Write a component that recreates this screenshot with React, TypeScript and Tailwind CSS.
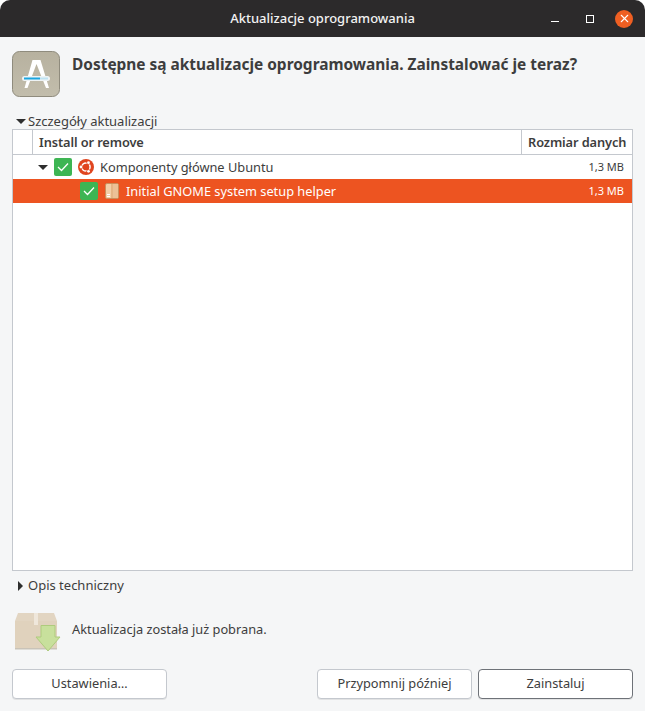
import { X } from "lucide-react";

const Check = () => (
  <span className="flex size-[18px] items-center justify-center rounded-[2px] bg-[#3db553]">
    <svg width="12" height="10" viewBox="0 0 12 10" fill="none" stroke="white" strokeWidth="1.3">
      <path d="M1 5l3.5 3.5L11 1.5" />
    </svg>
  </span>
);

const UbuntuLogo = () => (
  <svg width="16" height="16" viewBox="0 0 16 16">
    <circle cx="8" cy="8" r="8" fill="#e0451f" />
    <circle cx="8" cy="8" r="4.1" fill="none" stroke="white" strokeWidth="1.5" />
    <circle cx="3" cy="8" r="2.1" fill="#e0451f" />
    <circle cx="10.5" cy="3.7" r="2.1" fill="#e0451f" />
    <circle cx="10.5" cy="12.3" r="2.1" fill="#e0451f" />
    <circle cx="3" cy="8" r="1.4" fill="white" />
    <circle cx="10.5" cy="3.7" r="1.4" fill="white" />
    <circle cx="10.5" cy="12.3" r="1.4" fill="white" />
  </svg>
);

const PackageIcon = () => (
  <svg width="14" height="16" viewBox="0 0 14 16">
    <rect x="0.5" y="0.5" width="13" height="15" rx="1.5" fill="#f3cfa8" stroke="#c98f5c" />
    <rect x="6.500" y="1" width="1" height="14" fill="#d79a63" />
    <rect x="8" y="1" width="5" height="14" fill="#ecc096" />
    <rect x="2" y="11" width="3" height="1" fill="#fff" />
    <rect x="2" y="13" width="3" height="1" fill="#fff" />
  </svg>
);

const AppIcon = () => (
  <svg width="48" height="46" viewBox="0 0 48 46">
    <defs>
      <linearGradient id="tile" x1="0" y1="0" x2="0" y2="1">
        <stop offset="0" stopColor="#b7b19f" />
        <stop offset="1" stopColor="#c2bdac" />
      </linearGradient>
    </defs>
    <rect x="0.5" y="0.5" width="47" height="45" rx="7" fill="url(#tile)" stroke="#8f8b7d" />
    <path d="M20.500 9h8L37 37h-3L24.500 13 15.500 37h-3z" fill="#fff" />
    <rect x="10" y="25" width="28" height="5" rx="2.500" fill="#eef3f4" />
    <rect x="12" y="26.500" width="16" height="2" fill="#1ba6e0" />
    <rect x="28" y="26.500" width="8" height="2" fill="#bfe3f2" />
  </svg>
);

const BoxIcon = () => (
  <svg width="46" height="40" viewBox="0 0 46 40">
    <path d="M3 1h36l3 8v28H0V9z" fill="#e2d5c2" />
    <path d="M0 9h42v28H0z" fill="#e0d2bd" />
    <rect x="19" y="1" width="4" height="12" fill="#efe7db" />
    <rect x="0" y="36" width="42" height="1.500" fill="#c9c3b8" />
    <path d="M26 13.500h14V25h5L33 39 21 25h5z" fill="#c8e09c" stroke="#aecb7d" strokeWidth="1" />
  </svg>
);

const Button = ({ label, focused }: { label: string; focused?: boolean }) => (
  <button
    className={`h-[30px] w-[155px] rounded-[4px] border bg-white text-[12.8px] text-[#3d3d3d] shadow-[0_1px_0_rgba(0,0,0,0.08)] ${
      focused ? "border-[#6e7278]" : "border-[#c4c8ce]"
    }`}
  >
    {label}
  </button>
);

export default function App() {
  return (
    <div className="flex h-[711px] w-[645px] flex-col overflow-hidden rounded-t-[10px] bg-[#f5f6f7] font-['Noto_Sans',sans-serif] text-[13px] text-[#3d3d3d]">
      <header className="relative flex h-[37px] shrink-0 items-center justify-center bg-[#2c2a2b] text-[13px] font-medium text-[#f2f2f2]">
        Aktualizacje oprogramowania
        <div className="absolute top-0 right-[12px] flex h-full items-center">
          <span className="mt-[5px] mr-[27px] h-[1px] w-[8px] bg-white" />
          <span className="mr-[21px] size-[8px] border border-white" />
          <span className="flex size-[18px] items-center justify-center rounded-full bg-[#ef5f22]">
            <X size={13} color="white" strokeWidth={2} />
          </span>
        </div>
      </header>

      <div className="flex h-[71px] shrink-0 items-start pt-[14px] pl-[12px]">
        <AppIcon />
        <h1 className="ml-[12px] text-[15.45px] leading-[26px] font-bold whitespace-nowrap text-[#3d3d3d]">
          Dostępne są aktualizacje oprogramowania. Zainstalować je teraz?
        </h1>
      </div>

      <div className="flex h-[21px] shrink-0 items-center pt-[6px] pl-[16px]">
        <span className="mr-[2px] h-0 w-0 border-x-[5px] border-t-[5px] border-x-transparent border-t-[#2e2e2e]" />
        Szczegóły aktualizacji
      </div>

      <div className="mx-[12px] flex h-[442px] shrink-0 flex-col border border-[#c4c8ce] bg-white text-[12.8px]">
        <div className="flex h-[25px] shrink-0 border-b border-[#c4c8ce] font-semibold tracking-[-0.1px]">
          <div className="w-[20px] border-r border-[#c4c8ce]" />
          <div className="flex flex-1 items-center pt-px pl-[6px]">Install or remove</div>
          <div className="flex w-[111px] items-center border-l border-[#c4c8ce] pt-px pl-[6px] whitespace-nowrap">
            Rozmiar danych
          </div>
        </div>
        <div className="flex h-[24px] shrink-0 items-center pr-[8px] pl-[25px]">
          <span className="mr-[6px] h-0 w-0 border-x-[5px] border-t-[5px] border-x-transparent border-t-[#2e2e2e]" />
          <Check />
          <span className="mr-[6px] ml-[6px]">
            <UbuntuLogo />
          </span>
          <span className="pt-px">Komponenty główne Ubuntu</span>
          <span className="ml-auto text-[11px]">1,3 MB</span>
        </div>
        <div className="flex h-[24px] shrink-0 items-center bg-[#ed5421] pr-[8px] pl-[67px] text-white">
          <Check />
          <span className="mr-[7px] ml-[7px]">
            <PackageIcon />
          </span>
          <span className="pt-px">Initial GNOME system setup helper</span>
          <span className="ml-auto text-[11px]">1,3 MB</span>
        </div>
      </div>

      <div className="flex h-[28px] shrink-0 items-center pt-px pl-[18px]">
        <span className="mr-[5px] h-0 w-0 border-y-[5px] border-l-[5px] border-y-transparent border-l-[#2e2e2e]" />
        Opis techniczny
      </div>

      <div className="flex h-[56px] shrink-0 items-center pl-[15px]">
        <div className="mt-[10px]">
          <BoxIcon />
        </div>
        <span className="mt-[6px] ml-[11px] text-[12.8px]">Aktualizacja została już pobrana.</span>
      </div>

      <div className="mt-[14px] flex gap-[6px] px-[12px]">
        <Button label="Ustawienia…" />
        <div className="flex-1" />
        <Button label="Przypomnij później" />
        <Button label="Zainstaluj" focused />
      </div>
    </div>
  );
}
